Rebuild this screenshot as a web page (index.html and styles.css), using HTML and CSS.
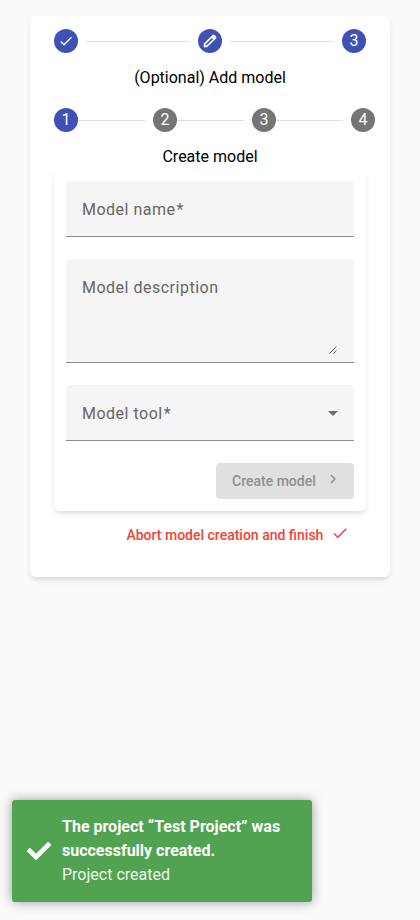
FILE: index.html
```html
<!DOCTYPE html>
<html lang="en">
<head>
<meta charset="utf-8">
<title>Create model</title>
<link rel="stylesheet" href="styles.css">
</head>
<body>
<main class="card">
  <div class="steps">
    <span class="step"><svg viewBox="0 0 24 24"><path d="M9 16.17 4.83 12l-1.42 1.41L9 19 21 7l-1.41-1.41z"/></svg></span>
    <span class="line"></span>
    <span class="step"><svg viewBox="0 0 24 24"><path fill-rule="evenodd" d="M2.5 16.3v5.2h5.2L21.3 7.9a1.6 1.6 0 0 0 0-2.2l-3-3a1.6 1.6 0 0 0-2.2 0zM14.7 7.6l1.7 1.7-9.6 9.6H5.1v-1.7z"/></svg></span>
    <span class="line"></span>
    <span class="step">3</span>
  </div>
  <h1 class="title">(Optional) Add model</h1>
  <div class="steps steps-inner">
    <span class="step">1</span>
    <span class="line"></span>
    <span class="step pending">2</span>
    <span class="line"></span>
    <span class="step pending">3</span>
    <span class="line"></span>
    <span class="step pending">4</span>
  </div>
  <h2 class="title">Create model</h2>
  <div class="form-clip">
    <form class="form">
      <div class="field"><label>Model name<span class="required">*</span></label></div>
      <div class="field area"><label>Model description</label>
        <svg class="grip" viewBox="0 0 8 8"><path d="M.5 7.5l7-7M4.5 7.5l3-3"/></svg>
      </div>
      <div class="field"><label>Model tool<span class="required">*</span></label><span class="arrow"></span></div>
      <button class="create" type="button" disabled>Create model
        <svg viewBox="0 0 24 24"><path d="M10 6 8.59 7.41 13.17 12l-4.58 4.59L10 18l6-6z"/></svg>
      </button>
    </form>
  </div>
  <button class="abort" type="button">Abort model creation and finish
    <svg viewBox="0 0 24 24"><path d="M9 16.17 4.83 12l-1.42 1.41L9 19 21 7l-1.41-1.41z"/></svg>
  </button>
</main>
<aside class="toast">
  <svg viewBox="0 0 512 512"><path d="M173.898 439.404l-166.4-166.4c-9.997-9.997-9.997-26.206 0-36.204l36.203-36.204c9.997-9.998 26.207-9.998 36.204 0L192 312.69 432.095 72.596c9.997-9.997 26.207-9.997 36.204 0l36.203 36.204c9.997 9.997 9.997 26.206 0 36.204l-294.4 294.401c-9.998 9.997-26.207 9.997-36.204-.001z"/></svg>
  <div><strong>The project “Test Project” was successfully created.</strong><p>Project created</p></div>
</aside>
</body>
</html>
```
FILE: styles.css
```css
* { box-sizing: border-box; }
body {
  margin: 0;
  min-height: 920px;
  padding-top: 16px;
  background: #fafafa;
  font: 400 16px/24px Roboto, sans-serif;
}
svg { fill: currentColor; display: block; }
.card {
  width: 360px;
  height: 561px;
  margin: 0 auto;
  padding: 13px 24px 0;
  background: #fff;
  border-radius: 6px;
  box-shadow: 0 4px 6px -1px rgba(0,0,0,.1), 0 2px 4px -1px rgba(0,0,0,.06);
}
.steps { display: flex; align-items: center; gap: 8px; height: 24px; }
.step {
  flex: none;
  display: flex;
  align-items: center;
  justify-content: center;
  width: 24px;
  height: 24px;
  border-radius: 50%;
  background: #3f51b5;
  color: #fff;
}
.step svg { width: 16px; height: 16px; }
.pending { background: #757575; }
.line { flex: 1; height: 1px; background: #e0e0e0; }
.steps-inner { gap: 0; width: 321px; margin-top: 18px; }
.steps-inner .line { margin-right: 8px; }
.title { margin: 0; font-size: 16px; font-weight: 400; text-align: center; }
.steps + .title { margin-top: 13px; }
.form-clip { margin: 0 -10px; padding: 0 10px 10px; clip-path: inset(3px 0 0); }
.form {
  display: flex;
  flex-direction: column;
  gap: 22px;
  height: 342px;
  padding: 12px;
  border-radius: 6px;
  box-shadow: 0 4px 6px -1px rgba(0,0,0,.1), 0 2px 4px -1px rgba(0,0,0,.06);
}
.field {
  display: flex;
  height: 56px;
  padding: 17px 16px 14px;
  background: #f5f5f5;
  border-bottom: 1px solid #8c8c8c;
  border-radius: 4px 4px 0 0;
  color: #666;
  letter-spacing: .5px;
  justify-content: space-between;
}
.required { margin-left: 1px; }
.area { height: 104px; }
.grip { align-self: flex-end; width: 8px; height: 8px; margin: 0 1px -6px 0; fill: none; stroke: #444; stroke-width: .8; }
.arrow { align-self: center; margin-bottom: 1px; border: 5px solid transparent; border-top-color: #6c6c6c; border-bottom: 0; }
button { display: flex; align-items: center; border: 0; font: 500 14px/36px Roboto, sans-serif; }
.create {
  align-self: flex-end;
  width: 138px;
  height: 36px;
  padding: 0 12px 0 16px;
  border-radius: 4px;
  background: #e0e0e0;
  color: #8f8f8f;
  justify-content: space-between;
}
button svg { width: 18px; height: 18px; margin-bottom: 4px; }
.abort {
  width: 222.6px;
  height: 36px;
  margin: -4px 17px 0 auto;
  padding: 0;
  justify-content: space-between;
  white-space: nowrap;
  background: none;
  color: #f44336;
}
.toast {
  position: absolute;
  left: 12px;
  top: 800px;
  display: flex;
  align-items: center;
  gap: 11px;
  width: 300px;
  height: 102px;
  padding: 15px;
  border-radius: 3px;
  background: #51a351;
  color: #fff;
  box-shadow: 0 0 12px #999;
}
.toast svg { flex: none; width: 24px; height: 24px; }
.toast p { margin: 0; opacity: .9; }
```
